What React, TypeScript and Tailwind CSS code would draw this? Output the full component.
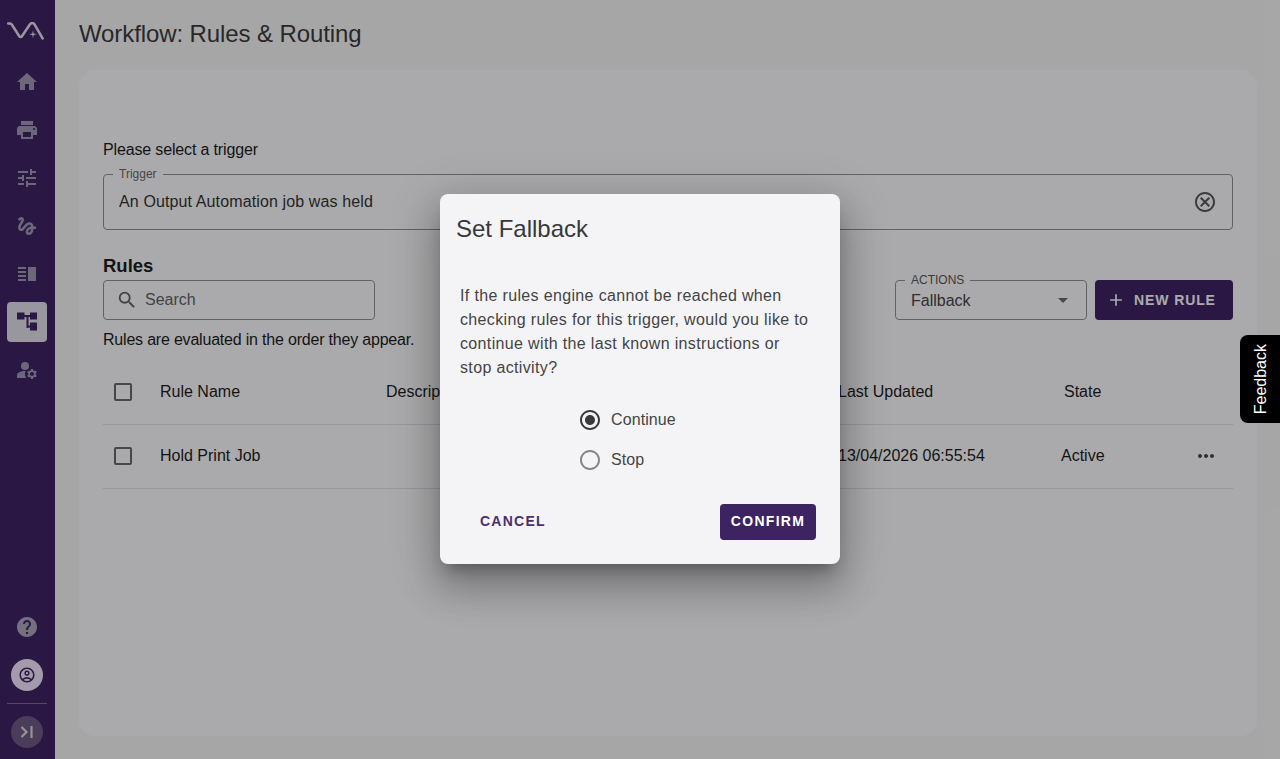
import React from "react";
import {
  MdHome, MdPrint, MdTune, MdGesture, MdVerticalSplit, MdManageAccounts, MdHelp,
  MdOutlineAccountCircle, MdSearch, MdArrowDropDown, MdAdd, MdMoreHoriz, MdOutlineCancel,
  MdRadioButtonChecked, MdRadioButtonUnchecked, MdCheckBoxOutlineBlank,
} from "react-icons/md";

const font = { fontFamily: '"Liberation Sans", Arial, sans-serif' };

function TreeIcon() {
  return (
    <svg width="24" height="24" viewBox="0 0 24 24" fill="#3d2162">
      <path d="M2 2.500h7.500v7H2zM15 2.500h7v7h-7zM15 12.500h7v8h-7z" />
      <path d="M9 5h6v2H9zM11.500 6h2v12h-2zM13 15.500h3v2h-3z" />
    </svg>
  );
}

function Logo() {
  return (
    <svg width="40" height="18" viewBox="0 0 40 18" fill="none">
      <path d="M1.200 1.500h1.800c.8 0 1.300.3 1.800 1l7.300 11.500c.9 1.400 2.100 1.400 3 0l7.900-11.700c1.400-1.900 3.200-1.900 4.500 0l8.200 14.200" stroke="#dcd8e0" strokeWidth="2.500" strokeLinecap="round" strokeLinejoin="round" />
      <path d="M26 8.200l.7 3.300 3.100.7-3.100.7-.7 3.300-.7-3.300-3.100-.7 3.100-.7z" fill="#dcd8e0" />
    </svg>
  );
}

function NavIcon({ children }: { children: React.ReactNode }) {
  return <div className="flex h-10 w-10 items-center justify-center text-[24px] text-[#9d95ae]">{children}</div>;
}

export default function App() {
  return (
    <div className="relative flex h-[759px] w-[1280px] overflow-hidden bg-[#eeeef0] text-[#1c1c1c]" style={font}>
      <aside className="flex w-[55px] shrink-0 flex-col items-center bg-[#3d2162] pt-[22px] pr-px pb-[11px]">
        <Logo />
        <div className="mt-[22px] flex flex-col items-center gap-[8px]">
          <NavIcon><MdHome /></NavIcon>
          <NavIcon><MdPrint /></NavIcon>
          <NavIcon><MdTune /></NavIcon>
          <NavIcon><MdGesture /></NavIcon>
          <NavIcon><MdVerticalSplit /></NavIcon>
          <div className="flex h-10 w-10 items-center justify-center rounded bg-[#dcd9e2]"><TreeIcon /></div>
          <NavIcon><MdManageAccounts /></NavIcon>
        </div>
        <div className="mt-auto flex flex-col items-center">
          <div className="text-[24px] text-[#a7a1b3]"><MdHelp /></div>
          <div className="mt-[20px] flex h-8 w-8 items-center justify-center rounded-full bg-[#eadff5] text-[18px] text-[#3d2162]"><MdOutlineAccountCircle /></div>
          <div className="mt-[12px] h-px w-10 bg-[#7a678f]" />
          <div className="mt-[12px] flex h-8 w-8 items-center justify-center rounded-full bg-[#6a5880] text-[#d7d2dd]">
            <svg width="18" height="18" viewBox="0 0 18 18" fill="none" stroke="currentColor" strokeWidth="2.200">
              <path d="M3.500 4l5 5-5 5" /><path d="M13.500 3v12" />
            </svg>
          </div>
        </div>
      </aside>

      <main className="flex min-w-0 flex-1 flex-col pr-[23px] pl-6">
        <h1 className="mt-[19px] h-[30px] text-[24px] leading-[30px] tracking-[-0.1px] text-[#3a3a3c]">Workflow: Rules &amp; Routing</h1>
        <section className="mt-[21px] flex h-[666px] flex-col rounded-2xl bg-[#f4f4f6] px-6 pt-[70px]">
          <p className="h-5 text-[16px] leading-5 tracking-[-0.15px]">Please select a trigger</p>
          <div className="relative mt-[14px] flex h-14 items-center justify-between rounded border border-[#8d8d8d] pr-[15px] pl-[15px]">
            <span className="absolute -top-[8px] left-[9px] bg-[#f4f4f6] px-[6px] text-[12px] leading-[14px] text-[#666]">Trigger</span>
            <span className="text-[16px] tracking-[0.12px] text-[#333]">An Output Automation job was held</span>
            <span className="text-[24px] text-[#555]"><MdOutlineCancel /></span>
          </div>

          <h2 className="mt-[26px] h-5 text-[18.500px] leading-5 font-bold">Rules</h2>
          <div className="mt-[4px] flex h-10 items-center justify-between">
            <div className="flex h-10 w-[272px] items-center rounded border border-[#8d8d8d] pl-[12px] text-[#5f5f5f]">
              <span className="text-[22px]"><MdSearch /></span>
              <span className="ml-[7px] text-[16px]">Search</span>
            </div>
            <div className="flex items-center gap-2">
              <div className="relative flex h-10 w-[192px] items-center justify-between rounded border border-[#8d8d8d] pr-[11px] pl-[15px]">
                <span className="absolute -top-[7px] left-[9px] bg-[#f4f4f6] px-[6px] text-[12px] leading-[13px] text-[#555]">ACTIONS</span>
                <span className="pt-[2px] text-[16px] text-[#444]">Fallback</span>
                <span className="text-[24px] text-[#666]"><MdArrowDropDown /></span>
              </div>
              <div className="flex h-10 w-[138px] items-center gap-2 rounded bg-[#3d2162] pl-[11px] text-[14px] font-bold tracking-[0.900px] text-[#f4f4f6]">
                <span className="text-[20px]"><MdAdd /></span>
                NEW RULE
              </div>
            </div>
          </div>
          <p className="mt-[10px] h-5 text-[16px] leading-5 tracking-[-0.2px]">Rules are evaluated in the order they appear.</p>

          <div className="mt-[11px] grid h-[64px] grid-cols-[57px_226px_452px_226px_1fr] items-center border-b border-[#d9d9db] pb-[2px] text-[16px]">
            <span className="pl-2 text-[24px] text-[#666]"><MdCheckBoxOutlineBlank /></span>
            <span>Rule Name</span>
            <span>Description</span>
            <span>Last Updated</span>
            <span>State</span>
          </div>
          <div className="grid h-[64px] grid-cols-[57px_226px_452px_226px_1fr] items-center border-b border-[#d9d9db] pb-[2px] text-[16px]">
            <span className="pl-2 text-[24px] text-[#666]"><MdCheckBoxOutlineBlank /></span>
            <span>Hold Print Job</span>
            <span />
            <span>13/04/2026 06:55:54</span>
            <span className="-ml-[3px] flex items-center justify-between pr-[15px]">
              Active
              <span className="text-[24px] text-[#444]"><MdMoreHoriz /></span>
            </span>
          </div>
        </section>
      </main>

      <div className="absolute inset-0 flex items-center justify-center bg-black/30 pb-[2px]">
        <div className="flex h-[370px] w-[400px] flex-col rounded-lg bg-[#f4f4f6] px-4 shadow-[0_11px_15px_-7px_rgba(0,0,0,0.3),0_24px_38px_3px_rgba(0,0,0,0.2),0_9px_46px_8px_rgba(0,0,0,0.15)]">
          <h2 className="mt-[20px] h-[30px] text-[24px] leading-[30px] text-[#38383a]">Set Fallback</h2>
          <p className="mt-[40px] ml-1 w-[352px] text-[16px] leading-6 tracking-[0.35px] text-[#444]">
            If the rules engine cannot be reached when checking rules for this trigger, would you like to continue with the last known instructions or stop activity?
          </p>
          <div className="mt-[28px] ml-[122px] flex flex-col gap-4 self-start text-[16px] tracking-[0.1px] text-[#444]">
            <div className="flex h-6 items-center gap-[9px]">
              <span className="text-[24px] text-[#3a3a3c]"><MdRadioButtonChecked /></span>Continue
            </div>
            <div className="flex h-6 items-center gap-[9px]">
              <span className="text-[24px] text-[#858585]"><MdRadioButtonUnchecked /></span>Stop
            </div>
          </div>
          <div className="mt-[32px] flex items-center justify-between pr-2 pl-[24px]">
            <span className="text-[14px] font-bold tracking-[1.250px] text-[#4a3070]">CANCEL</span>
            <div className="flex h-9 w-24 items-center justify-center rounded bg-[#3d2362] text-[14px] font-bold tracking-[1.300px] text-white">CONFIRM</div>
          </div>
        </div>
      </div>

      <div className="absolute top-[335px] right-0 flex h-[88px] w-10 items-center justify-center rounded-l-lg bg-black pl-[2px]">
        <span className="rotate-180 text-[16px] font-medium text-white [writing-mode:vertical-rl]">Feedback</span>
      </div>
    </div>
  );
}
